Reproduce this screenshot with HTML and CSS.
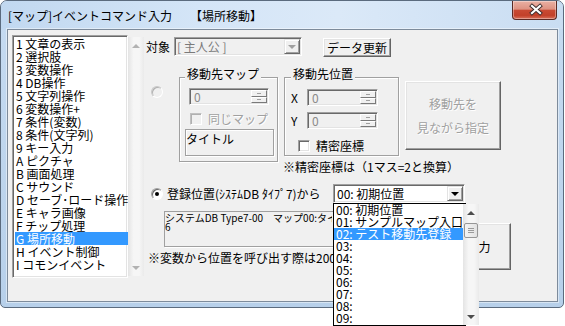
FILE: index.html
```html
<!DOCTYPE html>
<html lang="ja">
<head>
  <meta charset="UTF-8">
  <title>[マップ]イベントコマンド入力</title>
  <link rel="stylesheet" href="styles.css">
</head>
<body>
  <div class="window">
    <div class="titlebar">
      <span class="title">[マップ]イベントコマンド入力　　【場所移動】</span>
      <span class="close">
        <svg width="43" height="17" viewBox="0 0 43 17">
          <path d="M19 5 L27 12 M27 5 L19 12" stroke="#3b2b2b" stroke-width="4" stroke-linecap="square"/>
          <path d="M19 5 L27 12 M27 5 L19 12" stroke="#fff" stroke-width="2.2" stroke-linecap="square"/>
        </svg>
      </span>
    </div>
    <div class="client">
      <div class="cmdlist">
        <ul class="items">
          <li>1 文章の表示</li>
          <li>2 選択肢</li>
          <li>3 変数操作</li>
          <li>4 DB操作</li>
          <li>5 文字列操作</li>
          <li>6 変数操作+</li>
          <li>7 条件(変数)</li>
          <li>8 条件(文字列)</li>
          <li>9 キー入力</li>
          <li>A ピクチャ</li>
          <li>B 画面処理</li>
          <li>C サウンド</li>
          <li>D セーブ･ロード操作</li>
          <li>E キャラ画像</li>
          <li>F チップ処理</li>
          <li class="sel">G 場所移動</li>
          <li>H イベント制御</li>
          <li>I コモンイベント</li>
        </ul>
        <div class="vscroll off">
          <span class="arrow up"></span>
          <span class="arrow down"></span>
        </div>
      </div>

      <div class="panel">
        <div class="row target">
          <span class="lbl">対象</span>
          <div class="combo disabled"><span class="val">[ 主人公 ]</span><span class="drop"></span></div>
          <button class="btn refresh">データ更新</button>
        </div>

        <div class="row direct">
          <span class="radio off"></span>
          <div class="group g-map">
            <span class="gtitle">移動先マップ</span>
            <div class="spin map"><span class="num">0</span><span class="spinbtns"><i class="up"></i><i class="down"></i></span></div>
            <div class="check disabled"><span class="box"></span>同じマップ</div>
            <div class="mapname">タイトル</div>
          </div>
          <div class="group g-pos">
            <span class="gtitle">移動先位置</span>
            <div class="coord">
              <span class="axis">X</span>
              <div class="spin pos"><span class="num">0</span><span class="spinbtns"><i></i><i></i></span></div>
            </div>
            <div class="coord">
              <span class="axis">Y</span>
              <div class="spin pos"><span class="num">0</span><span class="spinbtns"><i></i><i></i></span></div>
            </div>
            <div class="check fine-check"><span class="box"></span>精密座標</div>
          </div>
          <button class="btn big" disabled>移動先を<br>見ながら指定</button>
        </div>

        <div class="note fine">※精密座標は（1マス=2と換算）</div>

        <div class="row saved">
          <span class="radio on"></span>
          <span class="savedlbl">登録位置(ｼｽﾃﾑDB ﾀｲﾌﾟ7)から</span>
          <div class="combo"><span class="val">00: 初期位置</span><span class="drop"></span></div>
        </div>

        <div class="row lower">
          <div class="lowerleft">
            <div class="memo"><span class="clip">システムDB Type7-00　マップ00:タイトル<br>6</span></div>
            <div class="note var">※変数から位置を呼び出す際は2000000</div>
          </div>
          <button class="btn ok">入力</button>
        </div>

        <div class="droplist">
          <ul class="opts">
            <li>00: 初期位置</li>
            <li>01: サンプルマップ入口</li>
            <li class="sel">02: テスト移動先登録</li>
            <li>03:</li>
            <li>04:</li>
            <li>05:</li>
            <li>06:</li>
            <li>07:</li>
            <li>08:</li>
            <li>09:</li>
          </ul>
          <div class="vscroll">
            <span class="arrow up"></span>
            <span class="thumb"></span>
            <span class="arrow down"></span>
          </div>
        </div>
      </div>
    </div>
  </div>
</body>
</html>
```

FILE: styles.css
```css
* {
  box-sizing: border-box;
}
html, body {
  min-height: 326px;
}
body {
  margin: 0;
  background: #fff;
  font-family: "Noto Sans CJK JP", "Noto Sans", sans-serif;
  font-size: 12px;
  color: #000;
}
ul {
  list-style: none;
  margin: 0;
  padding: 0;
}

/* window frame */
.window {
  width: 564px;
  height: 308px;
  border: 1px solid #5b6b7e;
  border-radius: 7px 7px 5px 5px;
  background: linear-gradient(180deg, #c6dbf1, #b7d0ea);
  display: flex;
  flex-direction: column;
}
.titlebar {
  height: 28px;
  flex: none;
  display: flex;
  justify-content: space-between;
  padding: 0 6px 0 7px;
  border-radius: 6px 6px 0 0;
  background: linear-gradient(90deg, #c1d8f0 0%, #d4e5f7 35%, #dbe9f8 60%, #c9ddf2 100%);
}
.title {
  align-self: center;
  line-height: 14px;
  margin-top: 1px;
  white-space: nowrap;
}
.close {
  width: 45px;
  height: 19px;
  border: 1px solid #5a2a24;
  border-top: none;
  border-radius: 0 0 4px 4px;
  background: linear-gradient(180deg, #eab0a3 0%, #de9282 45%, #c84a33 52%, #c2412a 80%, #d8705a 100%);
  box-shadow: inset 0 0 0 1px rgba(255,255,255,0.35);
}
.close svg {
  display: block;
}
.client {
  margin: 0 5px 5px 6px;
  height: 273px;
  flex: none;
  border: 1px solid #7d8b9b;
  background: #f0f0f0;
  display: flex;
  align-items: flex-start;
  box-shadow: 0 0 0 1px rgba(255,255,255,0.45);
}

/* command list */
.cmdlist {
  margin: 5px 0 0 4px;
  width: 116px;
  height: 243px;
  flex: none;
  display: flex;
  background: #fff;
  padding: 1px;
  border: 1px solid;
  border-color: #a0a0a0 #fff #fff #a0a0a0;
  box-shadow: inset 1px 1px 0 #696969, inset -1px -1px 0 #e3e3e3;
}
.items {
  flex: 1;
  padding-left: 1px;
}
.items li {
  height: 13px;
  line-height: 13px;
  padding-left: 1px;
  white-space: nowrap;
}
.items li.sel, .opts li.sel {
  background: #3399ff;
  color: #fff;
}

/* scrollbars */
.vscroll {
  width: 16px;
  flex: none;
  display: flex;
  flex-direction: column;
  background: linear-gradient(90deg, #e4e4e4, #f6f6f6 35%, #f6f6f6 70%, #eaeaea);
}
.arrow {
  height: 17px;
  display: flex;
  align-items: center;
  justify-content: center;
}
.arrow.down {
  margin-top: auto;
}
.arrow.up::before {
  content: "";
  border-left: 4px solid transparent;
  border-right: 4px solid transparent;
  border-bottom: 4px solid #4d4d4d;
}
.arrow.down::before {
  content: "";
  border-left: 4px solid transparent;
  border-right: 4px solid transparent;
  border-top: 4px solid #4d4d4d;
}
.vscroll.off .arrow.up::before {
  border-bottom-color: #b2b2b2;
}
.vscroll.off .arrow.down::before {
  border-top-color: #b2b2b2;
}
.thumb {
  margin: 2px 0 0 1px;
  width: 14px;
  height: 15px;
  border: 1px solid #969696;
  border-radius: 2px;
  background:
    linear-gradient(#9a9a9a, #9a9a9a) 3px 4px / 6px 1px no-repeat,
    linear-gradient(#9a9a9a, #9a9a9a) 3px 6px / 6px 1px no-repeat,
    linear-gradient(#9a9a9a, #9a9a9a) 3px 8px / 6px 1px no-repeat,
    linear-gradient(90deg, #f4f4f4, #e2e2e2);
}

/* right panel */
.panel {
  flex: 1;
  position: relative;
  margin-left: 17px;
  padding-top: 7px;
  height: 100%;
}
.row {
  display: flex;
}
.target {
  height: 19px;
}
.lbl {
  width: 29px;
  padding-left: 1px;
  line-height: 19px;
}
.combo {
  display: flex;
  width: 132px;
  height: 19px;
  background: #fff;
  padding: 1px;
  border: 1px solid;
  border-color: #a0a0a0 #fff #fff #a0a0a0;
  box-shadow: inset 1px 1px 0 #696969, inset -1px -1px 0 #e3e3e3;
}
.combo .val {
  flex: 1;
  line-height: 15px;
  padding-left: 2px;
  white-space: nowrap;
  overflow: hidden;
}
.combo .drop {
  width: 16px;
  background: #f0f0f0;
  border: 1px solid;
  border-color: #e3e3e3 #696969 #696969 #e3e3e3;
  box-shadow: inset 1px 1px 0 #fff, inset -1px -1px 0 #a0a0a0;
  display: flex;
  align-items: center;
  justify-content: center;
}
.combo .drop::before {
  content: "";
  border-left: 4px solid transparent;
  border-right: 4px solid transparent;
  border-top: 4px solid #000;
}
.combo.disabled {
  width: 128px;
  background: #f0f0f0;
  color: #7a7a7a;
}
.combo.disabled .val {
  padding-left: 1px;
}
.combo.disabled .drop::before {
  border-top-color: #a0a0a0;
}
.btn {
  font: inherit;
  color: #000;
  background: #f0f0f0;
  padding: 0;
  border: 1px solid;
  border-color: #fff #646464 #646464 #fff;
  box-shadow: inset -1px -1px 0 #a0a0a0, inset 1px 1px 0 #e3e3e3;
}
.refresh {
  margin: 1px 0 0 21px;
  width: 68px;
  height: 19px;
  line-height: 15px;
}

.direct {
  margin-top: 21px;
  align-items: flex-start;
}
.radio {
  width: 12px;
  height: 12px;
  flex: none;
  border-radius: 50%;
  border: 1px solid;
  border-color: #a0a0a0 #fff #fff #a0a0a0;
  box-shadow: inset 1px 1px 0 #696969;
  background: #fff;
  display: flex;
  align-items: center;
  justify-content: center;
}
.radio.off {
  margin: 9px 0 0 6px;
  background: #f0f0f0;
  box-shadow: inset 1px 1px 0 #b0b0b0;
  border-color: #c8c8c8 #fff #fff #c8c8c8;
}
.radio.on {
  margin-left: 6px;
}
.radio.on::after {
  content: "";
  width: 4px;
  height: 4px;
  border-radius: 50%;
  background: #000;
}
.group {
  border: 1px solid #a0a0a0;
  box-shadow: inset 1px 1px 0 #fff, 1px 1px 0 #fff;
}
.gtitle {
  display: block;
  width: fit-content;
  height: 12px;
  line-height: 12px;
  padding: 0 2px;
  background: #f0f0f0;
  margin: -10px 0 0 5px;
}
.g-map {
  margin-left: 16px;
  width: 99px;
  height: 85px;
}
.g-pos {
  margin-left: 6px;
  width: 115px;
  height: 79px;
}
.g-pos .gtitle {
  margin-left: 6px;
}
.spin {
  display: flex;
  height: 17px;
  background: #f0f0f0;
  color: #8a8a8a;
  padding: 1px;
  border: 1px solid;
  border-color: #a0a0a0 #fff #fff #a0a0a0;
  box-shadow: inset 1px 1px 0 #696969, inset -1px -1px 0 #e3e3e3;
}
.spin .num {
  flex: 1;
  line-height: 13px;
  padding-left: 3px;
}
.spinbtns {
  width: 16px;
  display: flex;
  flex-direction: column;
}
.spinbtns i {
  flex: 1;
  border: 1px solid;
  border-color: #fff #7a7a7a #7a7a7a #fff;
  display: flex;
  align-items: center;
  justify-content: center;
}
.spinbtns i::before {
  content: "";
  width: 4px;
  height: 1px;
  background: #a0a0a0;
}
.spin.map {
  margin: 8px 0 0 9px;
  width: 80px;
}
.spin.pos {
  width: 71px;
}
.check {
  display: flex;
  align-items: center;
  height: 13px;
  white-space: nowrap;
}
.check .box {
  width: 12px;
  height: 12px;
  margin-right: 6px;
  background: #fff;
  border: 1px solid;
  border-color: #a0a0a0 #fff #fff #a0a0a0;
  box-shadow: inset 1px 1px 0 #696969, inset -1px -1px 0 #e3e3e3;
}
.check.disabled {
  margin: 7px 0 0 10px;
  color: #a0a0a0;
  text-shadow: 1px 1px 0 #fff;
}
.check.disabled .box {
  background: #f0f0f0;
  border-color: #c0c0c0 #fff #fff #c0c0c0;
  box-shadow: inset 1px 1px 0 #b0b0b0;
}
.mapname {
  margin: 4px 0 0 5px;
  width: 89px;
  height: 27px;
  padding-top: 3px;
  line-height: 12px;
  border: 1px solid #a0a0a0;
  box-shadow: inset 1px 1px 0 #fff, 1px 1px 0 #fff;
}
.coord {
  display: flex;
  align-items: center;
  margin-top: 9px;
  height: 17px;
}
.coord + .coord {
  margin-top: 6px;
}
.axis {
  width: 22px;
  padding-left: 6px;
}
.fine-check {
  margin: 10px 0 0 13px;
}
.big {
  margin: 4px 0 0 6px;
  width: 96px;
  height: 69px;
  line-height: 24px;
  color: #a0a0a0;
  text-shadow: 1px 1px 0 #fff;
}
.note {
  line-height: 12px;
  white-space: nowrap;
}
.note.fine {
  margin: -1px 0 0 138px;
}
.saved {
  margin-top: 11px;
  height: 19px;
  align-items: center;
}
.savedlbl {
  margin-left: 4px;
  width: 166px;
  line-height: 19px;
  white-space: nowrap;
}
.lower {
  margin-top: 8px;
  align-items: flex-start;
}
.lowerleft {
  width: 295px;
}
.memo {
  margin-left: 19px;
  width: 276px;
  height: 36px;
  padding-top: 1px;
  font-size: 10px;
  line-height: 9px;
  white-space: nowrap;
  border: 1px solid #a0a0a0;
  box-shadow: 1px 1px 0 #fff;
}
.memo .clip {
  display: block;
  width: 167px;
  overflow: hidden;
}
.note.var {
  margin: 5px 0 0 3px;
  width: 185px;
  overflow: hidden;
}
.ok {
  margin: 12px 0 0 6px;
  width: 65px;
  height: 47px;
}

/* open combo list */
.droplist {
  position: absolute;
  left: 188px;
  top: 173px;
  width: 133px;
  height: 123px;
  z-index: 2;
  display: flex;
  background: #fff;
  border: 1px solid #000;
}
.opts {
  flex: 1;
}
.opts li {
  height: 12px;
  line-height: 12px;
  padding-left: 2px;
  white-space: nowrap;
}
```
